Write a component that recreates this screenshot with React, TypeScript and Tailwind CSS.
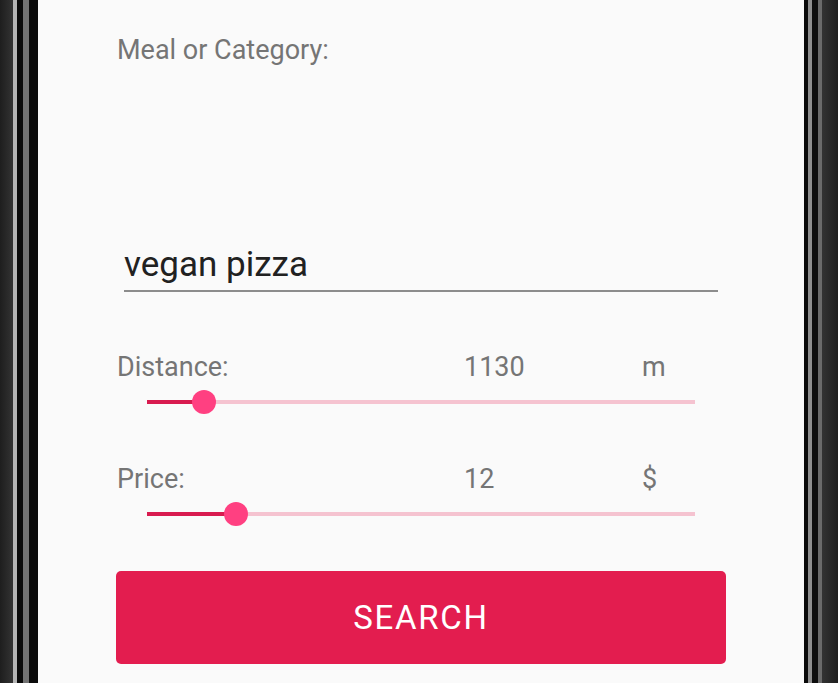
import React from "react"

type SliderRowProps = {
  label: string
  value: number
  unit: string
  fill: number // fraction of the track, 0..1
}

function SliderRow({ label, value, unit, fill }: SliderRowProps) {
  return (
    <div>
      <div className="flex pl-[79px] text-[27px] leading-[30px] text-[#757575]">
        <span className="w-[347px]">{label}</span>
        <span className="w-[178px]">{value}</span>
        <span>{unit}</span>
      </div>
      <div className="relative ml-[109px] mt-[8px] flex h-[24px] w-[548px] items-center">
        <div className="h-[4px] w-full bg-[#f5c3d0]" />
        <div
          className="absolute left-0 top-[10px] h-[4px] bg-[#d81b4f]"
          style={{ width: `${fill * 100}%` }}
        />
        <div
          className="absolute top-0 h-[24px] w-[24px] -translate-x-1/2 rounded-full bg-[#ff4081]"
          style={{ left: `${fill * 100}%` }}
        />
      </div>
    </div>
  )
}

function FrameLeft() {
  return (
    <div className="flex h-full shrink-0">
      <div className="w-[13px] bg-[linear-gradient(to_right,#1e1e1e,#333333)]" />
      <div className="w-[4px] bg-[#b4b4b4]" />
      <div className="w-[6px] bg-[#0a0a0a]" />
      <div className="w-[6px] bg-[#727272]" />
      <div className="w-[9px] bg-[#0b0b0b]" />
    </div>
  )
}

function FrameRight() {
  return (
    <div className="flex h-full shrink-0">
      <div className="w-[4px] bg-[#0a0a0a]" />
      <div className="w-[4px] bg-[#8e8e8e]" />
      <div className="w-[6px] bg-[#0d0d0d]" />
      <div className="w-[4px] bg-[#6a6a6a]" />
      <div className="w-[16px] bg-[linear-gradient(to_right,#333333,#1e1e1e)]" />
    </div>
  )
}

export default function App() {
  return (
    <div className="flex h-[683px] w-[838px] overflow-hidden bg-black font-['Roboto',sans-serif]">
      <FrameLeft />
      <div className="flex w-[766px] flex-col bg-[#fafafa]">
        <div className="pl-[79px] pt-[35px] text-[27px] leading-[30px] text-[#757575]">
          Meal or Category:
        </div>

        <div className="ml-[86px] mt-[180px] w-[594px] border-b-2 border-[#8c8c8c] pb-[5px] text-[35px] leading-[40px] text-[#212121]">
          vegan pizza
        </div>

        <div className="mt-[60px]">
          <SliderRow label="Distance:" value={1130} unit="m" fill={57 / 548} />
        </div>
        <div className="mt-[50px]">
          <SliderRow label="Price:" value={12} unit="$" fill={89 / 548} />
        </div>

        <button className="ml-[78px] mt-[45px] flex h-[93px] w-[610px] shrink-0 items-center justify-center rounded-[5px] bg-[#e31d4f] text-[33px] tracking-[1.7px] text-white">
          SEARCH
        </button>
      </div>
      <FrameRight />
    </div>
  )
}
